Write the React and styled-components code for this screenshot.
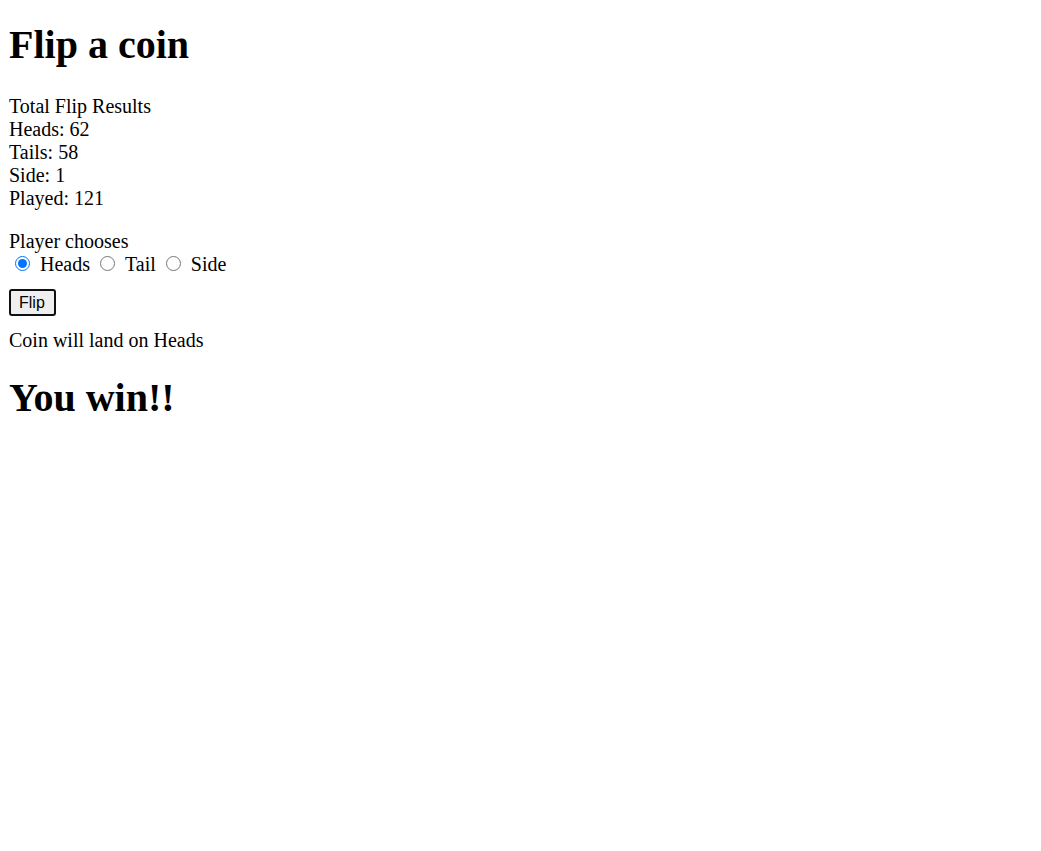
import { useState } from "react"
import styled, { createGlobalStyle } from "styled-components"

const GlobalStyle = createGlobalStyle`
  html, body {
    margin: 0;
    padding: 0;
    background: #fff;
  }
  body {
    font-family: "Liberation Serif", "Times New Roman", serif;
    font-size: 20px;
    line-height: 23px;
    color: #000;
  }
`

const Page = styled.div`
  padding: 0 9px;
  display: flex;
  flex-direction: column;
  align-items: flex-start;
`

const Heading = styled.h1`
  font-size: 40px;
  line-height: 41px;
  font-weight: 700;
  margin: ${p => p.$top}px 0 0;
`

const Stats = styled.div`
  margin-top: 30px;
`

const Line = styled.div``

const Chooser = styled.div`
  margin-top: 20px;
`

const Options = styled.div`
  display: flex;
  align-items: center;
  height: 23px;
`

const Option = styled.label`
  display: flex;
  align-items: center;
  margin-right: 1px;
`

const Radio = styled.input.attrs({ type: "radio" })`
  width: 15px;
  height: 15px;
  margin: 0 10px 0 ${p => (p.$first ? 6 : 9)}px;
  accent-color: #0075ff;
  position: relative;
  top: -1px;
`

const FlipButton = styled.button`
  margin-top: 13px;
  height: 27px;
  padding: 0 9px 0 8px;
  font-family: "Liberation Sans", Arial, sans-serif;
  font-size: 16px;
  line-height: 19px;
  color: #000;
  background: #efefef;
  border: 2px solid #101010;
  border-radius: 3px;
  cursor: pointer;
`

const Outcome = styled.p`
  margin: 13px 0 0;
`

const choices = ["Heads", "Tail", "Side"]

export default function App() {
  const [choice, setChoice] = useState("Heads")
  const stats = { heads: 62, tails: 58, side: 1, played: 121 }

  return (
    <>
      <GlobalStyle />
      <Page>
        <Heading $top={24}>Flip a coin</Heading>
        <Stats>
          <Line>Total Flip Results</Line>
          <Line>Heads: {stats.heads}</Line>
          <Line>Tails: {stats.tails}</Line>
          <Line>Side: {stats.side}</Line>
          <Line>Played: {stats.played}</Line>
        </Stats>
        <Chooser>
          <Line>Player chooses</Line>
          <Options>
            {choices.map((c, i) => (
              <Option key={c}>
                <Radio
                  name="choice"
                  $first={i === 0}
                  checked={choice === c}
                  onChange={() => setChoice(c)}
                />
                {c}
              </Option>
            ))}
          </Options>
        </Chooser>
        <FlipButton>Flip</FlipButton>
        <Outcome>Coin will land on Heads</Outcome>
        <Heading $top={25}>You win!!</Heading>
      </Page>
    </>
  )
}
